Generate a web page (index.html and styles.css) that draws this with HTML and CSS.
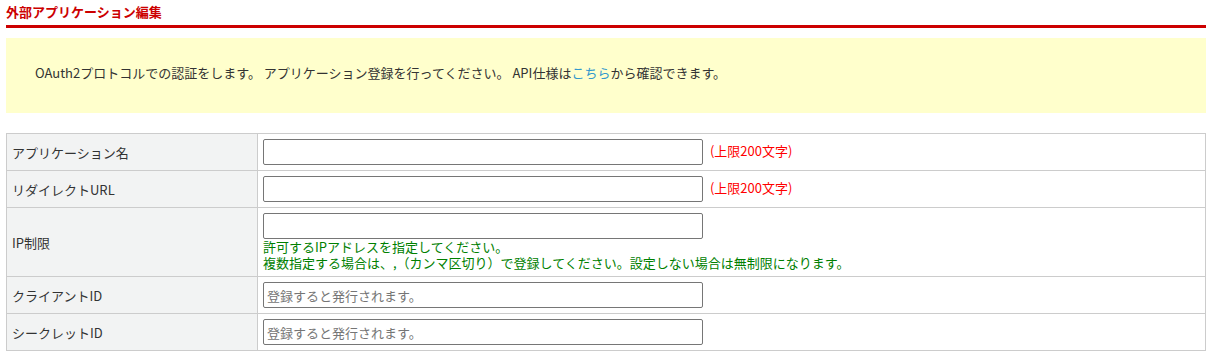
FILE: index.html
```html
<!DOCTYPE HTML>
<html>
<head>
  <title>外部アプリケーション編集</title>
  <meta charset="utf-8">
  <link rel="stylesheet" href="styles.css">
</head>
<body>
  <div class="page">
    <h3 class="page-title">外部アプリケーション編集</h3>

    <div class="info-box">
      OAuth2プロトコルでの認証をします。 アプリケーション登録を行ってください。 API仕様は<a href="#" class="info-link">こちら</a>から確認できます。
    </div>

    <table class="form-table">
      <tr>
        <th class="label">アプリケーション名</th>
        <td class="field">
          <input type="text" class="text-input" name="app_name">
          <span class="limit-note">(上限200文字)</span>
        </td>
      </tr>
      <tr>
        <th class="label">リダイレクトURL</th>
        <td class="field">
          <input type="text" class="text-input" name="redirect_url">
          <span class="limit-note">(上限200文字)</span>
        </td>
      </tr>
      <tr>
        <th class="label">IP制限</th>
        <td class="field field-help">
          <input type="text" class="text-input block-input" name="ip_limit">
          <div class="help-note">
            許可するIPアドレスを指定してください。<br>
            複数指定する場合は、,（カンマ区切り）で登録してください。設定しない場合は無制限になります。
          </div>
        </td>
      </tr>
      <tr>
        <th class="label">クライアントID</th>
        <td class="field">
          <input type="text" class="text-input" name="client_id" placeholder="登録すると発行されます。" readonly>
        </td>
      </tr>
      <tr>
        <th class="label">シークレットID</th>
        <td class="field">
          <input type="text" class="text-input" name="secret_id" placeholder="登録すると発行されます。" readonly>
        </td>
      </tr>
    </table>
  </div>
</body>
</html>
```

FILE: styles.css
```css
/* 外部アプリケーション編集 */
body {
  font-family: "Noto Sans CJK JP", "Noto Sans", sans-serif;
  font-size: 13px;
  color: #333;
  background-color: #fff;
  margin: 0;
}

.page {
  width: 1200px;
  margin: 0 6px;
}

.page-title {
  margin: 0;
  padding: 3px 0 5px;
  font-size: 13px;
  line-height: 17px;
  font-weight: bold;
  color: #cc0000;
  border-bottom: 3px solid #cc0000;
}

.info-box {
  margin-top: 10px;
  padding: 25px 29px 31px;
  line-height: 19px;
  background-color: #ffffcc;
}

.info-link {
  color: #3399cc;
  text-decoration: none;
}

.form-table {
  margin-top: 20px;
  width: 1200px;
  border-collapse: collapse;
  table-layout: fixed;
}

.form-table th,
.form-table td {
  border: 1px solid #cccccc;
  padding: 5px;
  vertical-align: middle;
}

.label {
  width: 240px;
  text-align: left;
  font-weight: normal;
  background-color: #f2f3f3;
}

.text-input {
  box-sizing: border-box;
  width: 440px;
  height: 26px;
  padding: 1px 3px;
  margin: 0;
  font-family: inherit;
  font-size: 13px;
  border: 1px solid #767676;
  border-radius: 2px;
  vertical-align: middle;
}

.block-input {
  display: block;
}

.text-input::placeholder {
  color: #757575;
}

.limit-note {
  margin-left: 4px;
  color: #ff0000;
  vertical-align: middle;
  position: relative;
  top: -2px;
}

.field-help {
  padding-bottom: 3px;
}

.help-note {
  color: #008000;
  line-height: 16px;
}
```
